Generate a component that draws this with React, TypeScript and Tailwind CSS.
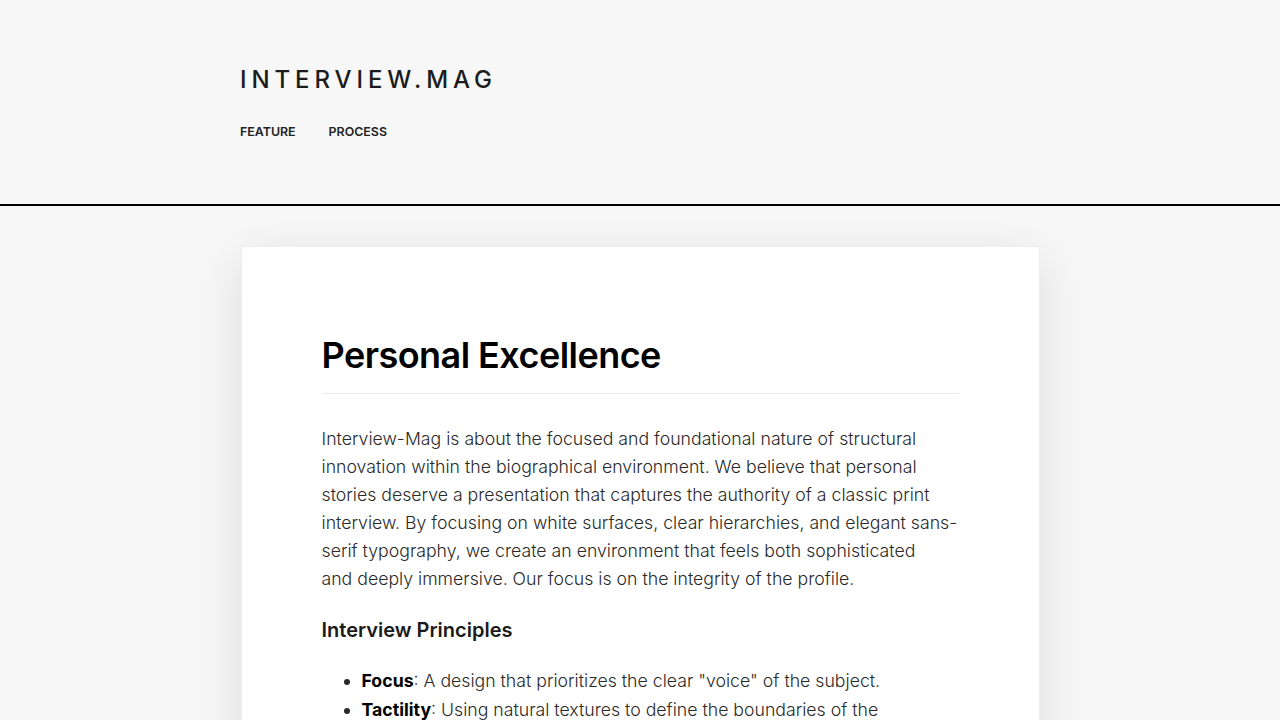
const principles = [
  { label: "Focus", text: 'A design that prioritizes the clear "voice" of the subject.' },
  { label: "Tactility", text: "Using natural textures to define the boundaries of the conversation and frame the narrative." },
  { label: "Clarity", text: "Readable typography and generous whitespace for long-form reading." },
];

export default function App() {
  return (
    <div className="min-h-screen bg-[#f7f7f7] text-[#1a1a1a] font-['Inter',sans-serif]">
      <header className="border-b-2 border-black">
        <div className="mx-auto w-[800px] pt-[64px] pb-[64px]">
          <h1 className="text-[24px] leading-[32px] font-medium tracking-[0.205em] text-[#1c1c1c]">
            INTERVIEW.MAG
          </h1>
          <nav className="mt-[28px] flex gap-[33px] text-[12.4px] leading-[16px] font-semibold text-[#222]">
            <a href="#">FEATURE</a>
            <a href="#">PROCESS</a>
          </nav>
        </div>
      </header>

      <main className="pt-[40px] pb-20">
        <article className="mx-auto w-[799px] bg-white border border-[#eeeeee] shadow-[0_12px_48px_rgba(0,0,0,0.11)] px-[80px] pt-[86px] pb-20">
          <h2 className="text-[36px] leading-[44px] font-semibold tracking-[-0.015em] text-black pb-[16px] border-b border-[#ebebeb]">
            Personal Excellence
          </h2>
          <p className="mt-[31px] text-[17.7px] leading-[28px] text-[#2a2a2a] font-light">
            Interview-Mag is about the focused and foundational nature of structural innovation within the
            biographical environment. We believe that personal stories deserve a presentation that captures the
            authority of a classic print interview. By focusing on white surfaces, clear hierarchies, and elegant
            sans-serif typography, we create an environment that feels both sophisticated
            <br />
            and deeply immersive. Our focus is on the integrity of the profile.
          </p>
          <h3 className="mt-[23px] text-[20px] leading-[28px] font-semibold text-[#1a1a1a]">Interview Principles</h3>
          <ul className="mt-[22px] list-disc pl-[40px] text-[17.7px] leading-[29px] text-[#2a2a2a] font-light">
            {principles.map((p) => (
              <li key={p.label}>
                <strong className="font-bold text-black">{p.label}</strong>: {p.text}
              </li>
            ))}
          </ul>
        </article>
      </main>
    </div>
  );
}
